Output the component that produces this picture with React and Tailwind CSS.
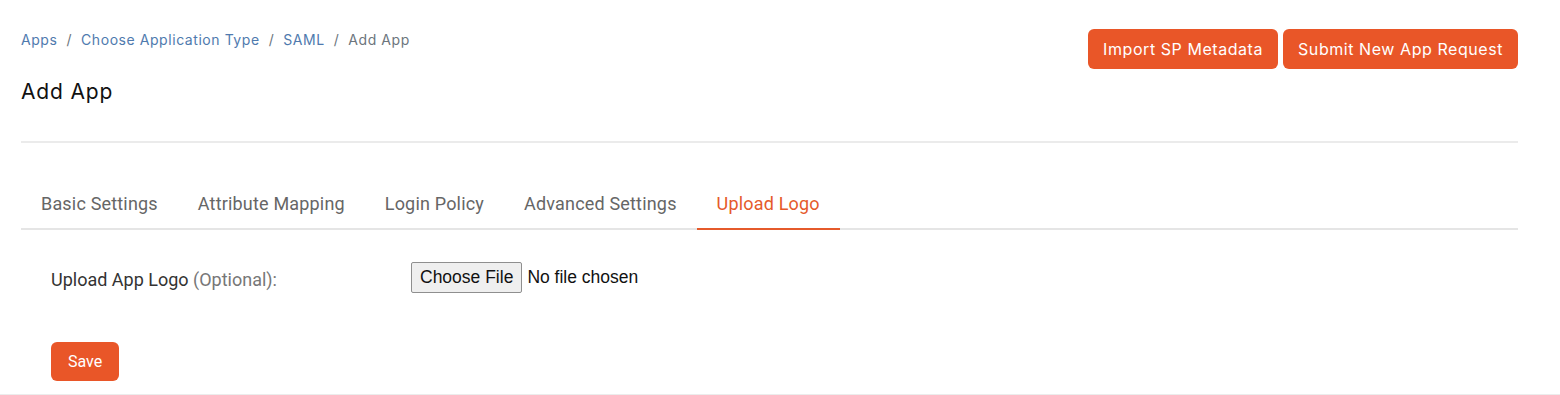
import { useState } from "react";

const tabs = [
  "Basic Settings",
  "Attribute Mapping",
  "Login Policy",
  "Advanced Settings",
  "Upload Logo",
];

function Breadcrumb() {
  return (
    <nav className="flex items-center text-[14px] leading-5 tracking-[0.04em] text-[#4f7aae]">
      <a href="#" className="hover:underline">Apps</a>
      <span className="px-[9px] text-[#6c757d]">/</span>
      <a href="#" className="hover:underline">Choose Application Type</a>
      <span className="px-[9px] text-[#6c757d]">/</span>
      <a href="#" className="hover:underline">SAML</a>
      <span className="px-[9px] text-[#6c757d]">/</span>
      <span className="text-[#6c757d]">Add App</span>
    </nav>
  );
}

export default function App() {
  const [active, setActive] = useState("Upload Logo");

  return (
    <div className="h-[395px] w-full bg-white border-b border-[#ececec] font-['Inter',sans-serif] text-[#212529]">
      <div className="pl-[21px] pr-[42px]">
        {/* header */}
        <div className="flex items-start justify-between pt-[30px]">
          <div>
            <Breadcrumb />
            <h1 className="mt-[28px] text-[21px] leading-7 tracking-[0.04em] font-normal text-[#111]">Add App</h1>
          </div>
          <div className="flex gap-[5px] -mt-px">
            <button className="h-10 px-[15px] rounded-md bg-[#e95628] text-white text-[16px] tracking-[0.035em]">
              Import SP Metadata
            </button>
            <button className="h-10 px-[15px] rounded-md bg-[#e95628] text-white text-[16px] tracking-[0.035em]">
              Submit New App Request
            </button>
          </div>
        </div>

        <div className="mt-[35px] h-[2px] bg-[#ebebeb]" />

        {/* tabs */}
        <div className="mt-[44px] flex border-b-2 border-[#e5e5e5] font-['Roboto',sans-serif] text-[18px] tracking-[0.01em]">
          {tabs.map((t) => (
            <button
              key={t}
              onClick={() => setActive(t)}
              className={
                t === active
                  ? "-mb-[2px] px-[20px] pb-[11px] pt-[3px] border-b-2 border-[#e55a2b] text-[#e55a2b]"
                  : "-mb-[2px] px-[20px] pb-[11px] pt-[3px] border-b-2 border-transparent text-[#666]"
              }
            >
              {t}
            </button>
          ))}
        </div>

        {/* upload row */}
        <div className="mt-[31px] flex items-center pl-[30px] font-['Roboto',sans-serif] text-[18px]">
          <div className="w-[360px] pt-[5px] text-[#333]">
            Upload App Logo <span className="text-[#777]">(Optional):</span>
          </div>
          <div className="flex items-center font-['Liberation_Sans',sans-serif] text-[17.5px]">
            <label className="h-[31px] px-[8px] flex items-center border border-[#8f8f8f] rounded-[2px] bg-[#efefef] text-[#111] cursor-pointer">
              Choose File
              <input type="file" className="hidden" />
            </label>
            <span className="ml-[5px] text-[#111]">No file chosen</span>
          </div>
        </div>

        <button className="mt-[49px] ml-[30px] h-[39px] w-[68px] rounded-md bg-[#e95628] text-white text-[16px] font-['Roboto',sans-serif]">
          Save
        </button>
      </div>
    </div>
  );
}
